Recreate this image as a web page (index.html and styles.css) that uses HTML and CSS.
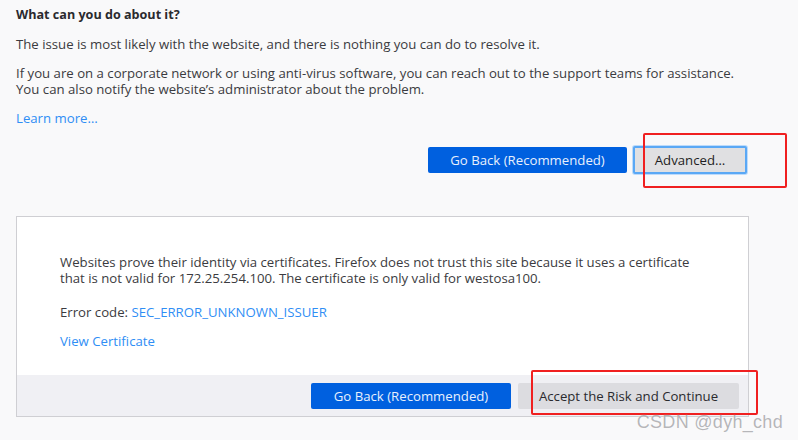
FILE: index.html
```html
<!DOCTYPE html>
<html>
<head>
<meta charset="utf-8">
<link rel="stylesheet" href="styles.css">
</head>
<body>
<div class="page">
  <h2 class="title">What can you do about it?</h2>
  <p class="para p1">The issue is most likely with the website, and there is nothing you can do to resolve it.</p>
  <p class="para p2">If you are on a corporate network or using anti-virus software, you can reach out to the support teams for assistance.<br>You can also notify the website’s administrator about the problem.</p>
  <p class="para p3"><a class="link" href="#">Learn more…</a></p>
  <div class="actions">
    <button class="btn primary go-back">Go Back (Recommended)</button>
    <span class="mark-wrap">
      <button class="btn secondary advanced">Advanced…</button>
      <span class="redbox redbox-adv"></span>
    </span>
  </div>
  <div class="card">
    <div class="card-body">
      <p class="para">Websites prove their identity via certificates. Firefox does not trust this site because it uses a certificate<br>that is not valid for 172.25.254.100. The certificate is only valid for westosa100.</p>
      <p class="para err">Error code: <a class="link" href="#">SEC_ERROR_UNKNOWN_ISSUER</a></p>
      <p class="para cert"><a class="link" href="#">View Certificate</a></p>
    </div>
    <div class="card-footer">
      <button class="btn primary go-back2">Go Back (Recommended)</button>
      <span class="mark-wrap">
        <button class="btn plain accept">Accept the Risk and Continue</button>
        <span class="redbox redbox-acc"></span>
      </span>
    </div>
  </div>
</div>
<div class="watermark">CSDN @dyh_chd</div>
</body>
</html>
```

FILE: styles.css
```css
html, body {
  margin: 0;
  padding: 0;
  background: #f9f9fa;
  width: 798px;
  height: 440px;
  overflow: hidden;
}
body {
  font-family: "Open Sans", "Noto Sans", sans-serif;
  font-size: 13.2px;
  line-height: 16px;
  color: #3b3b40;
  position: relative;
}
.page {
  padding: 7px 0 0 16px;
}
.title {
  margin: 0;
  font-size: 12.6px;
  font-weight: 700;
  line-height: 16px;
  color: #2a2a2e;
}
.para {
  margin: 13px 0 0 0;
}
.link {
  color: #2f8ef5;
  text-decoration: none;
}
.actions {
  display: flex;
  justify-content: flex-end;
  align-items: center;
  gap: 6px;
  margin-top: 19px;
  width: 731px;
  height: 30px;
}
.btn {
  font-family: inherit;
  font-size: 13.2px;
  line-height: 16px;
  height: 26px;
  border-radius: 2px;
  border: none;
  padding: 0;
  cursor: pointer;
}
.primary {
  background: #0060df;
  color: #e8f0fd;
}
.go-back { width: 199px; }
.secondary {
  background: #e0e0e2;
  color: #1e1e22;
  border: 2px solid #5aa8f5;
  box-shadow: 0 0 0 1px rgba(10,132,255,0.25);
  height: 28px;
  width: 114px;
}
.mark-wrap {
  position: relative;
  display: inline-flex;
}
.redbox {
  position: absolute;
  border: 2px solid #f02020;
  border-radius: 2px;
  pointer-events: none;
}
.redbox-adv {
  left: 10px;
  top: -13px;
  width: 140px;
  height: 51px;
}
.card {
  margin-top: 41px;
  width: 731px;
  background: #ffffff;
  border: 1px solid #cfcfd3;
}
.card-body {
  padding: 24px 0 26px 43px;
}
.card-body .para:first-child { margin-top: 13px; }
.err { margin-top: 18px; }
.card-footer {
  background: #f0f0f4;
  display: flex;
  justify-content: flex-end;
  gap: 7px;
  padding: 8px 9px 7px 0;
}
.go-back2 { width: 200px; }
.plain {
  background: #dcdce0;
  color: #2a2a2e;
  width: 221px;
}
.redbox-acc {
  left: 13px;
  top: -13px;
  width: 223px;
  height: 41px;
}
.watermark {
  position: absolute;
  right: 15px;
  bottom: 8px;
  font-family: "Liberation Sans", sans-serif;
  font-size: 18px;
  line-height: 20px;
  color: rgba(120,120,125,0.55);
  text-shadow: 0 0 1px rgba(255,255,255,0.9);
  letter-spacing: 0.3px;
}
```
